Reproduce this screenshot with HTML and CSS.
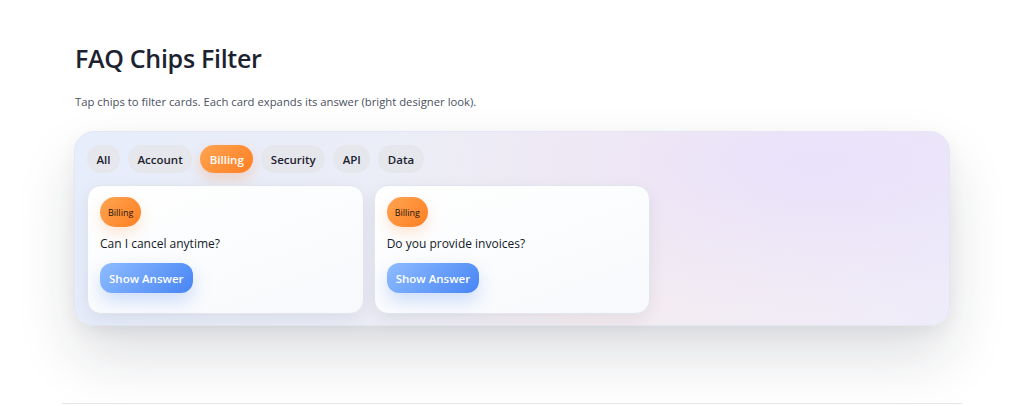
FILE: index.html
```html
<!DOCTYPE html>
<html lang="en">
<head>
<meta charset="utf-8">
<title>FAQ Chips Filter</title>
<link rel="stylesheet" href="styles.css">
</head>
<body>
<main class="page">
  <h1 class="title">FAQ Chips Filter</h1>
  <p class="lead">Tap chips to filter cards. Each card expands its answer (bright designer look).</p>
  <section class="panel">
    <div class="chips">
      <button class="chip">All</button>
      <button class="chip">Account</button>
      <button class="chip chip-active">Billing</button>
      <button class="chip">Security</button>
      <button class="chip">API</button>
      <button class="chip">Data</button>
    </div>
    <div class="grid">
      <article class="card">
        <span class="badge">Billing</span>
        <p class="question">Can I cancel anytime?</p>
        <button class="show">Show Answer</button>
      </article>
      <article class="card">
        <span class="badge">Billing</span>
        <p class="question">Do you provide invoices?</p>
        <button class="show">Show Answer</button>
      </article>
    </div>
  </section>
  <hr class="rule">
</main>
</body>
</html>
```
FILE: styles.css
```css
* { box-sizing: border-box; }
html, body { margin: 0; padding: 0; background: #fff; }
body {
  font-family: "Open Sans", "Noto Sans", sans-serif;
  color: #1f2430;
}
.page {
  width: 900px;
  margin: 0 auto;
  padding: 40px 0 0 14px;
}
.title {
  margin: 0 0 0 1px;
  font-size: 25px;
  line-height: 36px;
  font-weight: 600;
  color: #1d2230;
  letter-spacing: -0.3px;
}
.lead {
  margin: 18px 0 0 1px;
  font-size: 11.3px;
  line-height: 16px;
  color: #4a5160;
}
.panel {
  margin-top: 21px;
  width: 876px;
  height: 195px;
  padding: 13px 12px 12px;
  border: 1px solid #e3e7f1;
  border-radius: 20px;
  background:
    radial-gradient(ellipse 45% 80% at 85% 15%, rgba(232, 224, 251, 0.9) 0%, rgba(232, 224, 251, 0) 100%),
    linear-gradient(110deg, #e6edfb 0%, #ebedf7 35%, #f4ecf0 62%, #efecfa 100%);
  box-shadow: 0 30px 60px rgba(20, 28, 48, 0.14), 0 6px 18px rgba(20, 28, 48, 0.05);
}
.chips {
  display: flex;
  gap: 8px;
  height: 28px;
  margin-bottom: 12px;
}
.chip {
  font-family: inherit;
  font-size: 11.5px;
  font-weight: 600;
  color: #1d2230;
  height: 28px;
  padding: 0 9.5px;
  border: 0;
  border-radius: 14px;
  background: #e6e7ec;
}
.chip-active {
  color: #fff;
  background: linear-gradient(135deg, #ffa451 0%, #ff7f22 100%);
  box-shadow: 0 6px 14px rgba(255, 128, 40, 0.25);
}
.grid {
  display: grid;
  grid-template-columns: repeat(3, 1fr);
  gap: 10px;
}
.card {
  height: 129px;
  padding: 11px 12px 12px;
  border: 1px solid #e2e5ec;
  border-radius: 14px;
  background: linear-gradient(160deg, #ffffff 0%, #f7f9fc 100%);
  box-shadow: 0 6px 18px rgba(20, 28, 48, 0.07);
}
.badge {
  display: inline-flex;
  align-items: center;
  height: 30px;
  padding: 0 8px;
  border-radius: 15px;
  font-size: 9px;
  color: #1a1410;
  background: linear-gradient(135deg, #ffa451 0%, #ff7f22 100%);
  box-shadow: 0 6px 14px rgba(255, 128, 40, 0.2);
}
.question {
  margin: 8px 0 11px;
  font-size: 12px;
  line-height: 17px;
  color: #141a28;
}
.show {
  font-family: inherit;
  font-size: 11.5px;
  font-weight: 600;
  color: #fff;
  height: 30px;
  padding: 0 9px;
  border: 0;
  border-radius: 12px;
  background: linear-gradient(135deg, #8fbcff 0%, #4785f5 100%);
  box-shadow: 0 8px 18px rgba(70, 130, 245, 0.25);
}
.rule {
  margin: 77px 0 0 -12px;
  width: 900px;
  border: 0;
  border-top: 1px solid #e3e5ea;
}
```
